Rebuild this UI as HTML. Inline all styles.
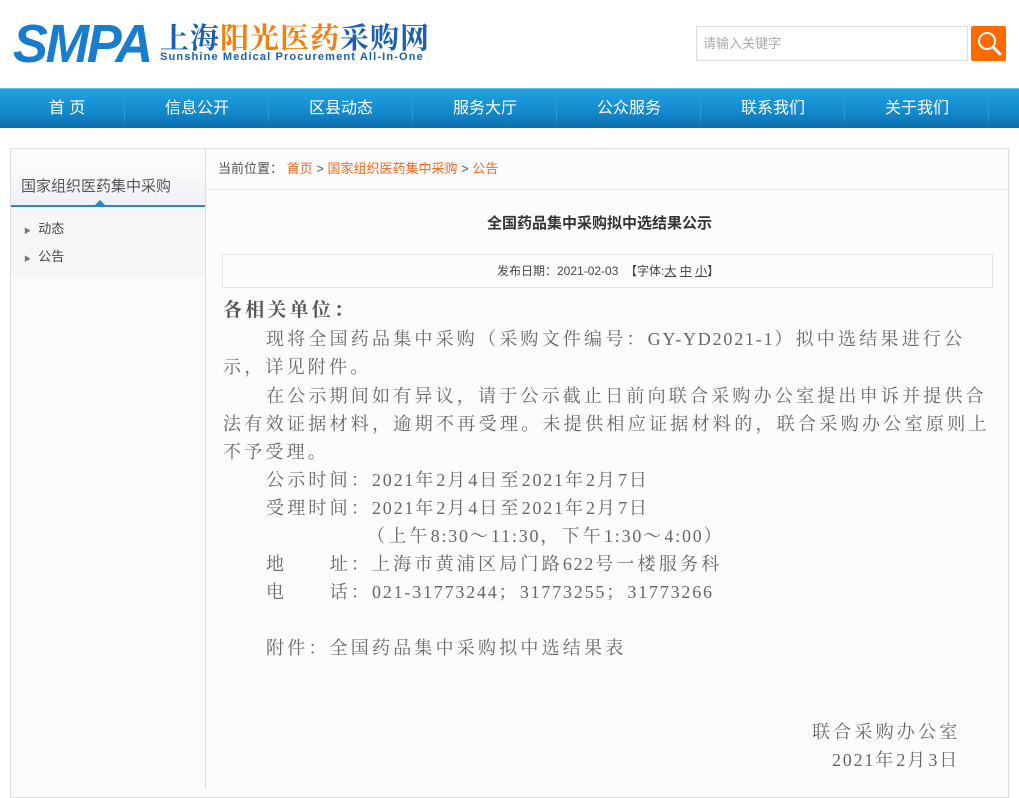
<!DOCTYPE html>
<html><head><meta charset="utf-8"><style>
*{margin:0;padding:0;box-sizing:border-box}
body{width:1019px;height:786px;overflow:hidden;background:#fff;font-family:"Liberation Sans","Noto Sans CJK SC",sans-serif;position:relative}
.abs{position:absolute;white-space:nowrap}
.nav{position:absolute;left:0;top:88px;width:1019px;height:40px;background:linear-gradient(#22a2e0,#1488cc 60%,#0b6fae);border-top:1px solid #5fc0f0}
.nav span{position:absolute;top:0;line-height:40px;color:#fff;font-size:16px;width:144px;text-align:center}
.sep{position:absolute;top:8px;width:1px;height:24px;background:#0c79b8;border-right:1px solid #2a9ad8}
.t{position:absolute;white-space:nowrap;font-family:"Liberation Serif","Noto Serif CJK SC",serif;font-size:18px;letter-spacing:3.2px;color:#666;line-height:28px}
.l{letter-spacing:1.8px}
</style></head><body>
<div class="abs" style="left:13px;top:17px;font:italic bold 54px/54px 'Liberation Sans',sans-serif;color:#1a7ccc;letter-spacing:-2.5px;transform:scaleX(0.97);transform-origin:left">SMPA</div>
<div class="abs" style="left:160px;top:21px;font:bold 29px/32px 'Noto Serif CJK SC',serif;color:#1a5fb0;letter-spacing:1px">上海<span style="color:#f08010">阳光医药</span>采购网</div>
<div class="abs" style="left:160px;top:51px;font:bold 11px/13px 'Liberation Sans',sans-serif;color:#1a5fb0;letter-spacing:1.15px">Sunshine Medical Procurement All-In-One</div>
<div class="abs" style="left:696px;top:26px;width:272px;height:35px;border:1px solid #ddd;font-size:13px;line-height:33px;padding-left:6px;color:#aaa">请输入关键字</div>
<div class="abs" style="left:971px;top:26px;width:35px;height:35px;background:#ff6a00;border-radius:2px">
<svg width="35" height="35"><circle cx="16" cy="15" r="8" fill="none" stroke="#fff" stroke-width="2"/><path d="M22 21 L29 28" stroke="#fff" stroke-width="3" stroke-linecap="round"/></svg></div>
<div class="nav">
<span style="left:-5px">首 页</span><span style="left:125px">信息公开</span><span style="left:269px">区县动态</span><span style="left:413px">服务大厅</span><span style="left:557px">公众服务</span><span style="left:701px">联系我们</span><span style="left:845px">关于我们</span>
<div class="sep" style="left:124px"></div><div class="sep" style="left:268px"></div><div class="sep" style="left:412px"></div><div class="sep" style="left:556px"></div><div class="sep" style="left:700px"></div><div class="sep" style="left:844px"></div><div class="sep" style="left:988px"></div>
</div>
<div class="abs" style="left:10px;top:148px;width:999px;height:650px;border:1px solid #ddd;background:#fcfcfc"></div>
<div class="abs" style="left:11px;top:160px;width:194px;height:117px;background:#f5f6f8"></div>
<div class="abs" style="left:11px;top:160px;width:194px;height:47px;background:linear-gradient(#fcfcfd,#eef1f4);border-bottom:2px solid #2787c8;font-size:15px;line-height:54px;color:#555;padding-left:10px">国家组织医药集中采购</div>
<div class="abs" style="left:95px;top:200px;width:0;height:0;border-left:5px solid transparent;border-right:5px solid transparent;border-bottom:5px solid #2787c8"></div>
<div class="abs" style="left:24px;top:219px;font-size:13px;line-height:20px;color:#444"><span style="font-size:7px;color:#777">▶</span>&nbsp; 动态</div>
<div class="abs" style="left:24px;top:247px;font-size:13px;line-height:20px;color:#444"><span style="font-size:7px;color:#777">▶</span>&nbsp; 公告</div>
<div class="abs" style="left:205px;top:149px;width:1px;height:640px;background:#ddd"></div>
<div class="abs" style="left:206px;top:189px;width:802px;height:1px;background:#e2e2e2"></div>
<div class="abs" style="left:218px;top:159px;font-size:13px;line-height:20px;color:#555">当前位置： <span style="color:#f06a20">首页</span> &gt; <span style="color:#f06a20">国家组织医药集中采购</span> &gt; <span style="color:#f06a20">公告</span></div>
<div class="abs" style="left:487px;top:213px;font-size:15px;font-weight:bold;line-height:22px;color:#333">全国药品集中采购拟中选结果公示</div>
<div class="abs" style="left:222px;top:254px;width:771px;height:34px;border:1px solid #e4e4e4;background:#fcfcfc;font-size:12px;line-height:32px;color:#444;padding-left:274px">发布日期：2021-02-03 &nbsp;【字体:<u>大</u> <u>中</u> <u>小</u>】</div>
<div class="t" style="left:223px;top:297px;font-size:19px;font-weight:bold;color:#555">各相关单位：</div>
<div class="t" style="left:266px;top:325px">现将全国药品集中采购（采购文件编号：<span class="l">GY-YD2021-1</span>）拟中选结果进行公</div>
<div class="t" style="left:223px;top:353px">示，详见附件。</div>
<div class="t" style="left:266px;top:382px">在公示期间如有异议，请于公示截止日前向联合采购办公室提出申诉并提供合</div>
<div class="t" style="left:223px;top:410px;letter-spacing:3.3px">法有效证据材料，逾期不再受理。未提供相应证据材料的，联合采购办公室原则上</div>
<div class="t" style="left:223px;top:438px">不予受理。</div>
<div class="t" style="left:266px;top:466px">公示时间：<span class="l">2021</span>年<span class="l">2</span>月<span class="l">4</span>日至<span class="l">2021</span>年<span class="l">2</span>月<span class="l">7</span>日</div>
<div class="t" style="left:266px;top:494px">受理时间：<span class="l">2021</span>年<span class="l">2</span>月<span class="l">4</span>日至<span class="l">2021</span>年<span class="l">2</span>月<span class="l">7</span>日</div>
<div class="t" style="left:367px;top:522px">（上午<span class="l">8:30</span>～<span class="l">11:30</span>，下午<span class="l">1:30</span>～<span class="l">4:00</span>）</div>
<div class="t" style="left:266px;top:550px">地　　址：上海市黄浦区局门路<span class="l">622</span>号一楼服务科</div>
<div class="t" style="left:266px;top:578px">电　　话：<span class="l">021-31773244</span>；<span class="l">31773255</span>；<span class="l">31773266</span></div>
<div class="t" style="left:266px;top:634px">附件：全国药品集中采购拟中选结果表</div>
<div class="t" style="left:812px;top:718px">联合采购办公室</div>
<div class="t" style="left:832px;top:746px"><span class="l">2021</span>年<span class="l">2</span>月<span class="l">3</span>日</div>
</body></html>
